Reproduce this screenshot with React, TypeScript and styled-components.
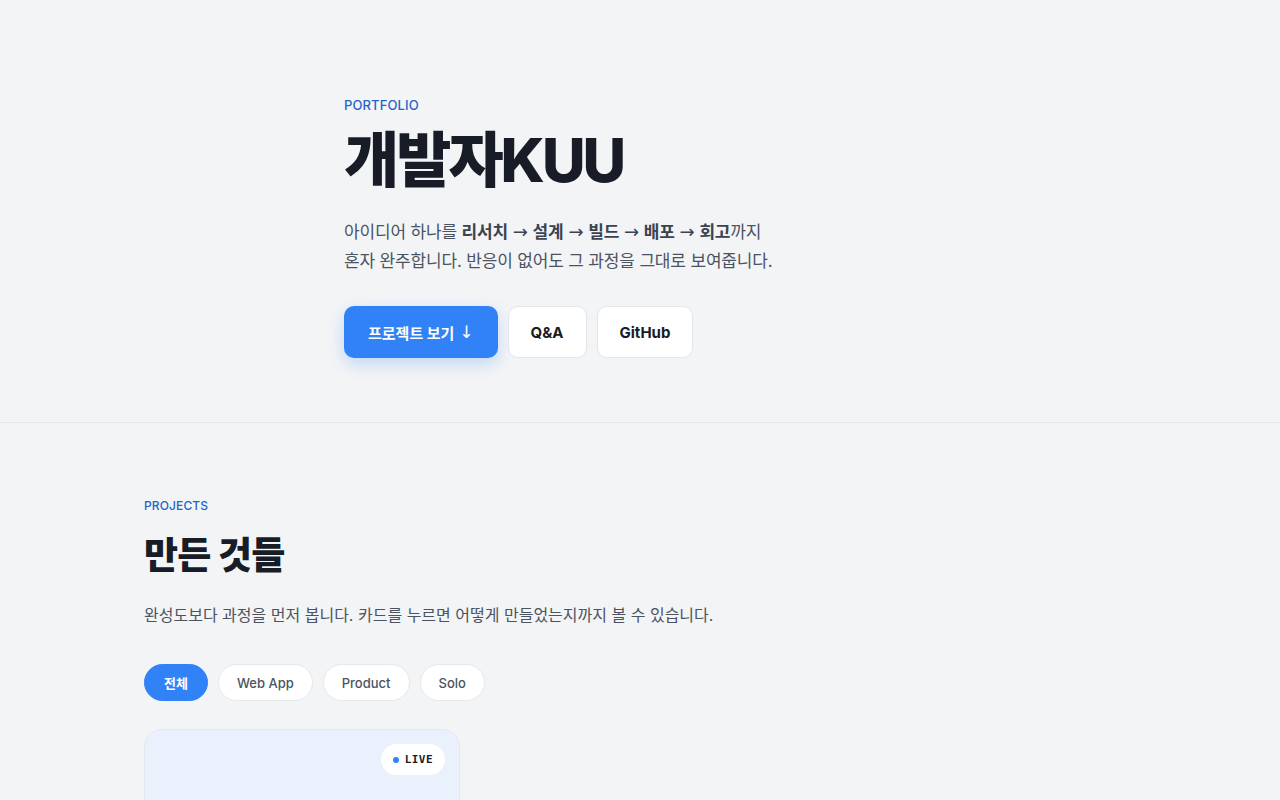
import React, { useState } from 'react';
import styled, { createGlobalStyle } from 'styled-components';

const GlobalStyle = createGlobalStyle`
  * { box-sizing: border-box; }
  html, body {
    margin: 0;
    padding: 0;
    background: #f3f4f6;
    font-family: Inter, "Noto Sans CJK KR", "Noto Sans", sans-serif;
    color: #171c26;
  }
`;

const Page = styled.div`
  min-height: 100vh;
`;

const Hero = styled.header`
  border-bottom: 1px solid #e3e6ea;
  padding: 96px 0 64px;
`;

const HeroInner = styled.div`
  width: 592px;
  margin: 0 auto;
`;

const Eyebrow = styled.div<{ $small?: boolean }>`
  font-size: ${p => (p.$small ? '12px' : '13px')};
  font-weight: 500;
  color: #2563c9;
  letter-spacing: 0.01em;
  line-height: 18px;
`;

const HeroTitle = styled.h1`
  margin: 8px 0 20px;
  font-size: 60px;
  font-weight: 800;
  letter-spacing: -0.05em;
  line-height: 76px;
  color: #171c26;
`;

const Lead = styled.p`
  margin: 0;
  font-size: 17px;
  line-height: 29px;
  color: #4b5361;
  letter-spacing: -0.01em;

  b {
    font-weight: 700;
    color: #3c4350;
  }
`;

const Arrow = styled.span`
  font-family: "DejaVu Sans", sans-serif;
  font-weight: 400;
  font-size: 18px;
  line-height: 0;
  margin: 0 1px;
`;

const Actions = styled.div`
  display: flex;
  gap: 10px;
  margin-top: 30px;
`;

const Button = styled.a<{ $primary?: boolean }>`
  display: inline-flex;
  align-items: center;
  justify-content: center;
  height: 52px;
  padding: 0 ${p => (p.$primary ? '24px' : '22px')};
  border-radius: 10px;
  font-size: 15px;
  font-weight: 700;
  text-decoration: none;
  cursor: pointer;
  ${p =>
    p.$primary
      ? `
    background: #3182f6;
    color: #fff;
    box-shadow: 0 6px 16px rgba(49, 130, 246, 0.25);
  `
      : `
    background: #fff;
    color: #171c26;
    border: 1px solid #e3e6ea;
  `}
`;

const DownArrow = styled.span`
  font-family: "DejaVu Sans", sans-serif;
  font-weight: 400;
  font-size: 17px;
  margin-left: 5px;
`;

const Section = styled.section`
  width: 992px;
  margin: 0 auto;
  padding: 74px 0 0;
`;

const SectionTitle = styled.h2`
  margin: 16px 0 21px;
  font-size: 37px;
  font-weight: 800;
  letter-spacing: -0.02em;
  line-height: 50px;
`;

const SectionLead = styled.p`
  margin: 0;
  font-size: 16px;
  line-height: 26px;
  color: #4b5361;
  letter-spacing: 0;
`;

const Filters = styled.div`
  display: flex;
  gap: 10px;
  margin-top: 36px;
`;

const Chip = styled.button<{ $active?: boolean }>`
  height: 37px;
  padding: 0 ${p => (p.$active ? '19px' : '18px')};
  border-radius: 999px;
  font-family: inherit;
  font-size: 13px;
  font-weight: ${p => (p.$active ? 700 : 550)};
  cursor: pointer;
  border: 1px solid ${p => (p.$active ? '#3182f6' : '#e6e8eb')};
  background: ${p => (p.$active ? '#3182f6' : '#fff')};
  color: ${p => (p.$active ? '#fff' : '#4b5361')};
`;

const Grid = styled.div`
  display: grid;
  grid-template-columns: repeat(3, 1fr);
  gap: 22px;
  margin-top: 28px;
`;

const Card = styled.article`
  height: 320px;
  border-radius: 18px;
  border: 1px solid #e3e8f0;
  background: #eaf1fc;
  display: flex;
  justify-content: flex-end;
  align-items: flex-start;
  padding: 14px 14px;
`;

const Badge = styled.span`
  display: inline-flex;
  align-items: center;
  gap: 6px;
  height: 31px;
  padding: 0 12px;
  border-radius: 999px;
  background: #fff;
  font-family: "DejaVu Sans Mono", "Liberation Mono", monospace;
  font-size: 11px;
  font-weight: 600;
  letter-spacing: 0.04em;
  color: #171c26;
`;

const Dot = styled.span`
  width: 6px;
  height: 6px;
  border-radius: 50%;
  background: #3182f6;
`;

const filters = ['전체', 'Web App', 'Product', 'Solo'];
const steps = ['리서치', '설계', '빌드', '배포', '회고'];

export default function App() {
  const [active, setActive] = useState('전체');
  return (
    <Page>
      <GlobalStyle />
      <Hero>
        <HeroInner>
          <Eyebrow>PORTFOLIO</Eyebrow>
          <HeroTitle>개발자KUU</HeroTitle>
          <Lead>
            아이디어 하나를{' '}
            <b>
              {steps.map((s, i) => (
                <React.Fragment key={s}>
                  {i > 0 && (
                    <>
                      {' '}
                      <Arrow>→</Arrow>{' '}
                    </>
                  )}
                  {s}
                </React.Fragment>
              ))}
            </b>
            까지
            <br />
            혼자 완주합니다. 반응이 없어도 그 과정을 그대로 보여줍니다.
          </Lead>
          <Actions>
            <Button $primary>
              프로젝트 보기<DownArrow>↓</DownArrow>
            </Button>
            <Button>Q&amp;A</Button>
            <Button>GitHub</Button>
          </Actions>
        </HeroInner>
      </Hero>
      <Section>
        <Eyebrow $small>PROJECTS</Eyebrow>
        <SectionTitle>만든 것들</SectionTitle>
        <SectionLead>
          완성도보다 과정을 먼저 봅니다. 카드를 누르면 어떻게 만들었는지까지 볼 수 있습니다.
        </SectionLead>
        <Filters>
          {filters.map(f => (
            <Chip key={f} $active={f === active} onClick={() => setActive(f)}>
              {f}
            </Chip>
          ))}
        </Filters>
        <Grid>
          <Card>
            <Badge>
              <Dot />
              LIVE
            </Badge>
          </Card>
        </Grid>
      </Section>
    </Page>
  );
}
